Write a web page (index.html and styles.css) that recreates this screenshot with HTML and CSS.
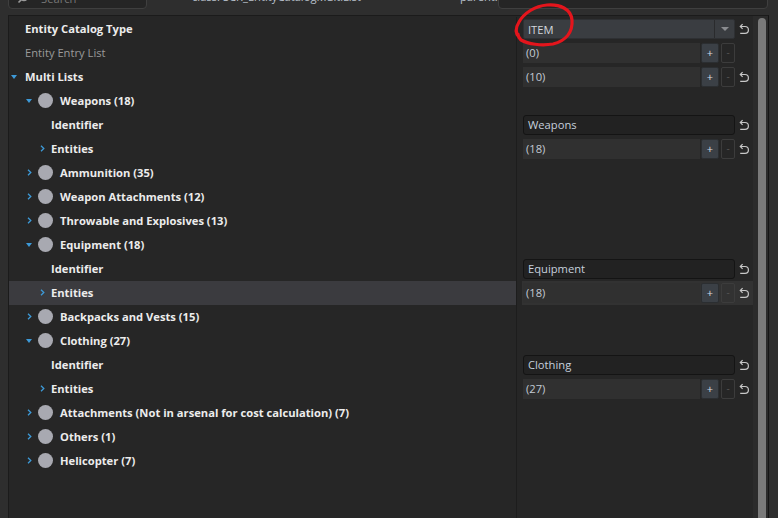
FILE: index.html
```html
<!DOCTYPE html>
<html lang="en">
<head>
    <meta charset="UTF-8">
    <meta name="viewport" content="width=device-width, initial-scale=1.0">
    <title>SCR_EntityCatalogMultiList</title>
    <link rel="stylesheet" href="styles.css">
</head>
<body>
    <div class="topbar">
        <div class="search">
            <svg class="search-icon" width="12" height="12" viewBox="0 0 12 12"><circle cx="7" cy="5" r="3.6" fill="none" stroke="#9a9a9a" stroke-width="1.4"/><path d="M4.4 7.6 L1.5 10.5" stroke="#9a9a9a" stroke-width="1.6"/></svg>
            <span>Search</span>
        </div>
        <div class="classname">class: SCR_EntityCatalogMultiList</div>
        <div class="parent-label">parent:</div>
        <div class="parent-input"></div>
    </div>

    <div class="panel">
        <div class="tree">
            <div class="row">
                <div class="l lvl0"><span class="arrow"></span><span class="name">Entity Catalog Type</span></div>
                <div class="r"><div class="val">
                    <div class="combo"><span class="combo-text">ITEM</span><span class="combo-btn"><i class="tri-gray"></i></span></div>
                    <svg class="reset" viewBox="0 0 12 12"><path d="M2.5 3.5 H7 A3.4 3.4 0 0 1 7 10.3 H2.2 M4.6 1.2 L2.3 3.5 L4.6 5.8" fill="none" stroke="#c8c8c8" stroke-width="1.2"/></svg>
                </div></div>
            </div>
            <div class="row">
                <div class="l lvl0"><span class="arrow"></span><span class="name dim">Entity Entry List</span></div>
                <div class="r"><div class="val">
                    <div class="array">(0)</div><div class="btn-plus">+</div><div class="btn-minus">-</div>
                </div></div>
            </div>
            <div class="row">
                <div class="l lvl0"><span class="arrow"><i class="tri-down"></i></span><span class="name">Multi Lists</span></div>
                <div class="r"><div class="val">
                    <div class="array">(10)</div><div class="btn-plus">+</div><div class="btn-minus">-</div>
                    <svg class="reset" viewBox="0 0 12 12"><path d="M2.5 3.5 H7 A3.4 3.4 0 0 1 7 10.3 H2.2 M4.6 1.2 L2.3 3.5 L4.6 5.8" fill="none" stroke="#c8c8c8" stroke-width="1.2"/></svg>
                </div></div>
            </div>

            <div class="row">
                <div class="l lvl1"><span class="arrow"><i class="tri-down"></i></span><span class="dot"></span><span class="name">Weapons (18)</span></div>
                <div class="r"></div>
            </div>
            <div class="row">
                <div class="l lvl2"><span class="arrow"></span><span class="name">Identifier</span></div>
                <div class="r"><div class="val">
                    <div class="text-input">Weapons</div>
                    <svg class="reset" viewBox="0 0 12 12"><path d="M2.5 3.5 H7 A3.4 3.4 0 0 1 7 10.3 H2.2 M4.6 1.2 L2.3 3.5 L4.6 5.8" fill="none" stroke="#c8c8c8" stroke-width="1.2"/></svg>
                </div></div>
            </div>
            <div class="row">
                <div class="l lvl2"><span class="arrow"><svg class="chev" viewBox="0 0 5 7"><path d="M1 0.8 L3.8 3.5 L1 6.2" fill="none" stroke="#3d9ad8" stroke-width="1.3"/></svg></span><span class="name">Entities</span></div>
                <div class="r"><div class="val">
                    <div class="array">(18)</div><div class="btn-plus">+</div><div class="btn-minus">-</div>
                    <svg class="reset" viewBox="0 0 12 12"><path d="M2.5 3.5 H7 A3.4 3.4 0 0 1 7 10.3 H2.2 M4.6 1.2 L2.3 3.5 L4.6 5.8" fill="none" stroke="#c8c8c8" stroke-width="1.2"/></svg>
                </div></div>
            </div>

            <div class="row">
                <div class="l lvl1"><span class="arrow"><svg class="chev" viewBox="0 0 5 7"><path d="M1 0.8 L3.8 3.5 L1 6.2" fill="none" stroke="#3d9ad8" stroke-width="1.3"/></svg></span><span class="dot"></span><span class="name">Ammunition (35)</span></div>
                <div class="r"></div>
            </div>
            <div class="row">
                <div class="l lvl1"><span class="arrow"><svg class="chev" viewBox="0 0 5 7"><path d="M1 0.8 L3.8 3.5 L1 6.2" fill="none" stroke="#3d9ad8" stroke-width="1.3"/></svg></span><span class="dot"></span><span class="name">Weapon Attachments (12)</span></div>
                <div class="r"></div>
            </div>
            <div class="row">
                <div class="l lvl1"><span class="arrow"><svg class="chev" viewBox="0 0 5 7"><path d="M1 0.8 L3.8 3.5 L1 6.2" fill="none" stroke="#3d9ad8" stroke-width="1.3"/></svg></span><span class="dot"></span><span class="name">Throwable and Explosives (13)</span></div>
                <div class="r"></div>
            </div>

            <div class="row">
                <div class="l lvl1"><span class="arrow"><i class="tri-down"></i></span><span class="dot"></span><span class="name">Equipment (18)</span></div>
                <div class="r"></div>
            </div>
            <div class="row">
                <div class="l lvl2"><span class="arrow"></span><span class="name">Identifier</span></div>
                <div class="r"><div class="val">
                    <div class="text-input">Equipment</div>
                    <svg class="reset" viewBox="0 0 12 12"><path d="M2.5 3.5 H7 A3.4 3.4 0 0 1 7 10.3 H2.2 M4.6 1.2 L2.3 3.5 L4.6 5.8" fill="none" stroke="#c8c8c8" stroke-width="1.2"/></svg>
                </div></div>
            </div>
            <div class="row selected">
                <div class="l lvl2"><span class="arrow"><svg class="chev" viewBox="0 0 5 7"><path d="M1 0.8 L3.8 3.5 L1 6.2" fill="none" stroke="#3d9ad8" stroke-width="1.3"/></svg></span><span class="name">Entities</span></div>
                <div class="r"><div class="val">
                    <div class="array">(18)</div><div class="btn-plus">+</div><div class="btn-minus">-</div>
                    <svg class="reset" viewBox="0 0 12 12"><path d="M2.5 3.5 H7 A3.4 3.4 0 0 1 7 10.3 H2.2 M4.6 1.2 L2.3 3.5 L4.6 5.8" fill="none" stroke="#c8c8c8" stroke-width="1.2"/></svg>
                </div></div>
            </div>

            <div class="row">
                <div class="l lvl1"><span class="arrow"><svg class="chev" viewBox="0 0 5 7"><path d="M1 0.8 L3.8 3.5 L1 6.2" fill="none" stroke="#3d9ad8" stroke-width="1.3"/></svg></span><span class="dot"></span><span class="name">Backpacks and Vests (15)</span></div>
                <div class="r"></div>
            </div>

            <div class="row">
                <div class="l lvl1"><span class="arrow"><i class="tri-down"></i></span><span class="dot"></span><span class="name">Clothing (27)</span></div>
                <div class="r"></div>
            </div>
            <div class="row">
                <div class="l lvl2"><span class="arrow"></span><span class="name">Identifier</span></div>
                <div class="r"><div class="val">
                    <div class="text-input">Clothing</div>
                    <svg class="reset" viewBox="0 0 12 12"><path d="M2.5 3.5 H7 A3.4 3.4 0 0 1 7 10.3 H2.2 M4.6 1.2 L2.3 3.5 L4.6 5.8" fill="none" stroke="#c8c8c8" stroke-width="1.2"/></svg>
                </div></div>
            </div>
            <div class="row">
                <div class="l lvl2"><span class="arrow"><svg class="chev" viewBox="0 0 5 7"><path d="M1 0.8 L3.8 3.5 L1 6.2" fill="none" stroke="#3d9ad8" stroke-width="1.3"/></svg></span><span class="name">Entities</span></div>
                <div class="r"><div class="val">
                    <div class="array">(27)</div><div class="btn-plus">+</div><div class="btn-minus">-</div>
                    <svg class="reset" viewBox="0 0 12 12"><path d="M2.5 3.5 H7 A3.4 3.4 0 0 1 7 10.3 H2.2 M4.6 1.2 L2.3 3.5 L4.6 5.8" fill="none" stroke="#c8c8c8" stroke-width="1.2"/></svg>
                </div></div>
            </div>

            <div class="row">
                <div class="l lvl1"><span class="arrow"><svg class="chev" viewBox="0 0 5 7"><path d="M1 0.8 L3.8 3.5 L1 6.2" fill="none" stroke="#3d9ad8" stroke-width="1.3"/></svg></span><span class="dot"></span><span class="name">Attachments (Not in arsenal for cost calculation) (7)</span></div>
                <div class="r"></div>
            </div>
            <div class="row">
                <div class="l lvl1"><span class="arrow"><svg class="chev" viewBox="0 0 5 7"><path d="M1 0.8 L3.8 3.5 L1 6.2" fill="none" stroke="#3d9ad8" stroke-width="1.3"/></svg></span><span class="dot"></span><span class="name">Others (1)</span></div>
                <div class="r"></div>
            </div>
            <div class="row">
                <div class="l lvl1"><span class="arrow"><svg class="chev" viewBox="0 0 5 7"><path d="M1 0.8 L3.8 3.5 L1 6.2" fill="none" stroke="#3d9ad8" stroke-width="1.3"/></svg></span><span class="dot"></span><span class="name">Helicopter (7)</span></div>
                <div class="r"></div>
            </div>

            <div class="row filler">
                <div class="l"></div>
                <div class="r"></div>
            </div>
        </div>
        <div class="scrollbar"><div class="thumb"></div></div>
    </div>

    <!-- red hand-drawn mark around the combo -->
    <svg class="mark" width="778" height="518" viewBox="0 0 778 518">
        <path d="M519 37 C515 33 516 27 519 22 C524 13 535 6 547 5 C560 4 571 9 572 20 C573 32 566 41 553 44 C541 46 528 44 521 40 C519 38 518 36 518 34" fill="none" stroke="#e4151c" stroke-width="3.2" stroke-linecap="round"/>
    </svg>
</body>
</html>
```

FILE: styles.css
```css
body {
    margin: 0;
    padding: 0;
    background-color: #2e2e2e;
    font-family: "Open Sans", "Noto Sans", sans-serif;
    font-size: 11.2px;
    color: #e4e4e4;
    height: 518px;
    overflow: hidden;
}

/* top bar, cut off by the screenshot */
.topbar {
    height: 15px;
    display: flex;
    align-items: flex-start;
    overflow: hidden;
}

.search {
    width: 137px;
    height: 20px;
    flex-shrink: 0;
    margin-left: 8px;
    margin-top: -13px;
    background-color: #252525;
    border: 1px solid #3f3f3f;
    border-radius: 4px;
    display: flex;
    align-items: center;
    color: #777777;
}

.search-icon {
    margin-left: 8px;
    margin-right: 12px;
}

.classname {
    margin-left: 45px;
    margin-top: -11px;
    line-height: 16px;
    color: #b9c1cc;
    width: 268px;
    flex-shrink: 0;
    white-space: nowrap;
}

.parent-label {
    margin-top: -11px;
    line-height: 16px;
    color: #b9c1cc;
    width: 38px;
    flex-shrink: 0;
}

.parent-input {
    width: 268px;
    height: 20px;
    flex-shrink: 0;
    margin-top: -13px;
    background-color: #252525;
    border: 1px solid #3f3f3f;
    border-radius: 4px;
}

/* main panel */
.panel {
    margin-left: 8px;
    width: 759px;
    height: 503px;
    display: flex;
    border-top: 1px solid #1b1b1b;
    border-left: 1px solid #1b1b1b;
    border-right: 1px solid #151515;
    background-color: #262626;
}

.tree {
    flex: 1;
    display: flex;
    flex-direction: column;
    padding-top: 1px;
}

.row {
    display: flex;
    height: 24px;
    flex-shrink: 0;
}

.row.filler {
    flex: 1;
}

.l {
    width: 507px;
    flex-shrink: 0;
    box-sizing: border-box;
    display: flex;
    align-items: center;
    white-space: nowrap;
    padding-bottom: 1px;
}

.r {
    flex: 1;
    border-left: 1px solid #1d1d1d;
    padding-left: 5px;
    display: flex;
}

.val {
    flex: 1;
    display: flex;
    align-items: center;
    padding-left: 1px;
}

.row.selected .l {
    background-color: #3b3b3f;
}

.row.selected .val {
    background-color: #323232;
}

.lvl0 {
    padding-left: 0;
}

.lvl1 {
    padding-left: 15px;
}

.lvl2 {
    padding-left: 28px;
}

.arrow {
    width: 10px;
    flex-shrink: 0;
    margin-right: 6px;
    display: flex;
    justify-content: center;
    align-items: center;
}

.lvl1 .arrow {
    margin-right: 4px;
}

.lvl2 .arrow {
    margin-right: 4px;
}

.tri-down {
    width: 0;
    height: 0;
    border-left: 3.5px solid transparent;
    border-right: 3.5px solid transparent;
    border-top: 4px solid #3d9ad8;
}

.chev {
    width: 5px;
    height: 7px;
}

.dot {
    width: 15px;
    height: 15px;
    flex-shrink: 0;
    border-radius: 50%;
    background-color: #a8a9b1;
    margin-right: 7px;
}

.name {
    font-weight: 700;
    color: #ececec;
}

.name.dim {
    font-weight: 400;
    color: #9a9a9a;
}

/* value widgets */
.combo {
    width: 212px;
    height: 20px;
    box-sizing: border-box;
    background-color: #3a3d41;
    border: 1px solid #2e3033;
    border-radius: 2px;
    display: flex;
    align-items: center;
}

.combo-text {
    flex: 1;
    padding-left: 4px;
    color: #d2d6dc;
}

.combo-btn {
    width: 19px;
    height: 18px;
    border-left: 1px solid #2a2b2d;
    display: flex;
    align-items: center;
    justify-content: center;
}

.tri-gray {
    width: 0;
    height: 0;
    border-left: 4px solid transparent;
    border-right: 4px solid transparent;
    border-top: 4px solid #8a8c90;
}

.array {
    width: 177px;
    height: 20px;
    line-height: 20px;
    background-color: #303030;
    padding-left: 3px;
    box-sizing: border-box;
    color: #c3cad4;
}

.btn-plus {
    width: 18px;
    height: 20px;
    margin-left: 1px;
    box-sizing: border-box;
    background-color: #3b4046;
    border: 1px solid #2b2e31;
    border-radius: 2px;
    color: #d8dce2;
    font-size: 11px;
    line-height: 17px;
    text-align: center;
}

.btn-minus {
    width: 14px;
    height: 20px;
    margin-left: 2px;
    box-sizing: border-box;
    border: 1px solid #3c3c3c;
    border-radius: 2px;
    color: #555555;
    font-size: 10px;
    line-height: 17px;
    text-align: center;
}

.text-input {
    width: 212px;
    height: 20px;
    box-sizing: border-box;
    background-color: #222222;
    border: 1px solid #141414;
    border-radius: 3px;
    padding-left: 4px;
    line-height: 18px;
    color: #c6d0dd;
}

.reset {
    width: 12px;
    height: 12px;
    margin-left: 3px;
}

/* scrollbar */
.scrollbar {
    width: 15px;
    flex-shrink: 0;
    background-color: #2b2b2b;
}

.thumb {
    width: 8px;
    height: 600px;
    margin-left: 5px;
    margin-top: 2px;
    border-radius: 4px;
    background-color: #7a7a7a;
}

.mark {
    position: absolute;
    left: 0;
    top: 0;
    pointer-events: none;
}
```
